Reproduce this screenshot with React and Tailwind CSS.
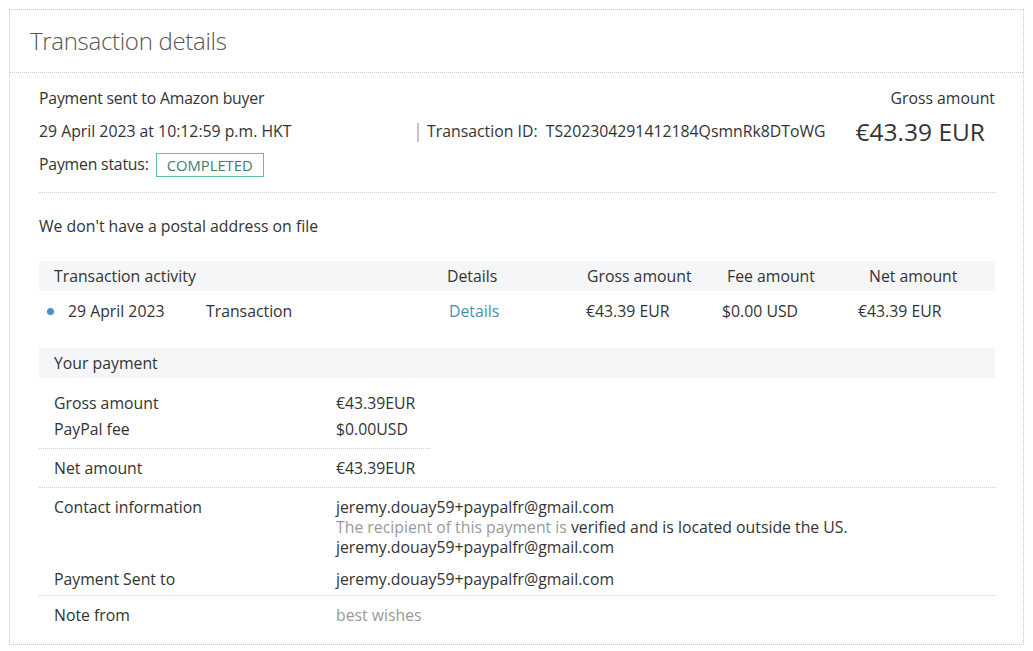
import React from 'react'

const FONT = { fontFamily: '"Open Sans", "Noto Sans", sans-serif' }

const EMAIL = 'jeremy.douay59+paypalfr@gmail.com'

// Labelled row of the "Your payment" block.
function Row({ label, children, className = '' }) {
  return (
    <div className={`flex pl-[15px] ${className}`}>
      <div className="w-[282px] shrink-0">{label}</div>
      <div>{children}</div>
    </div>
  )
}

const Rule = ({ className = '' }) => <div className={`border-t border-dotted border-[#cfcfcf] ${className}`} />

export default function App() {
  return (
    <div className="min-h-[651px] bg-white p-[9px] pb-[6px] text-[15.8px] text-[#333]" style={FONT}>
      <div className="border border-dotted border-[#c9c9c9]">
        <div className="h-[63px] flex items-center pl-[20px] border-b border-dotted border-[#c9c9c9]">
          <h1 className="text-[24px] font-light text-[#555] tracking-[-0.3px]">Transaction details</h1>
        </div>

        <div className="pl-[29px] pr-[28px]">
          {/* Summary */}
          <div className="mt-[15px] h-[20px] flex items-center justify-between leading-[20px]">
            <span className="tracking-[-0.2px]">Payment sent to Amazon buyer</span>
            <span>Gross amount</span>
          </div>
          <div className="mt-[9px] h-[30px] flex items-center justify-between pr-[10px]">
            <span>29 April 2023 at 10:12:59 p.m. HKT</span>
            <div className="flex items-center">
              <span className="w-[2px] h-[19px] bg-[#c7c7c7] mr-[8px]" />
              <span>Transaction ID:&nbsp; TS202304291412184QsmnRk8DToWG</span>
              <span className="ml-[30px] text-[24.5px] leading-[30px]">€43.39 EUR</span>
            </div>
          </div>
          <div className="mt-[5px] h-[26px] flex items-center">
            <span className="tracking-[-0.2px]">Paymen status:</span>
            <span className="ml-[7px] h-[24px] px-[10px] flex items-center border border-[#5dbfa6] text-[#3f7d6e] text-[14.8px]">
              COMPLETED
            </span>
          </div>
          <Rule className="mt-[14px]" />

          <div className="mt-[24px] h-[20px] flex items-center">We don't have a postal address on file</div>

          {/* Activity table */}
          <div className="mt-[24px] h-[30px] bg-[#f5f6f8] flex items-center pl-[15px] pt-[2px]">
            <span className="w-[393px]">Transaction activity</span>
            <span className="w-[140px]">Details</span>
            <span className="w-[140px]">Gross amount</span>
            <span className="w-[142px]">Fee amount</span>
            <span>Net amount</span>
          </div>
          <div className="h-[40px] flex items-center pl-[8px] pt-[1px]">
            <span className="w-[7px] h-[7px] rounded-full bg-[#4a8fcf] mr-[14px]" />
            <span className="w-[138px]">29 April 2023</span>
            <span className="w-[243px]">Transaction</span>
            <span className="w-[137px] text-[#4b8fb8]">Details</span>
            <span className="w-[136px]">€43.39 EUR</span>
            <span className="w-[136px]">$0.00 USD</span>
            <span>€43.39 EUR</span>
          </div>

          {/* Your payment */}
          <div className="mt-[17px] h-[30px] bg-[#f5f6f8] flex items-center pl-[15px] pt-[1px]">Your payment</div>
          <div className="mt-[12px] leading-[26px]">
            <Row label="Gross amount">€43.39EUR</Row>
            <Row label="PayPal fee">$0.00USD</Row>
          </div>
          <Rule className="mt-[6px] w-[391px]" />
          <div className="mt-[9px] leading-[20px]">
            <Row label="Net amount">€43.39EUR</Row>
          </div>
          <Rule className="mt-[9px]" />
          <div className="mt-[9px] leading-[20px]">
            <Row label="Contact information">
              <div>{EMAIL}</div>
              <div>
                <span className="text-[#9a9a9a]">The recipient of this payment is </span>
                verified and is located outside the US.
              </div>
              <div>{EMAIL}</div>
            </Row>
            <Row label="Payment Sent to" className="mt-[12px]">{EMAIL}</Row>
          </div>
          <Rule className="mt-[6px]" />
          <div className="mt-[9px] mb-[19px] leading-[20px]">
            <Row label="Note from">
              <span className="text-[#9a9a9a]">best wishes</span>
            </Row>
          </div>
        </div>
      </div>
    </div>
  )
}
